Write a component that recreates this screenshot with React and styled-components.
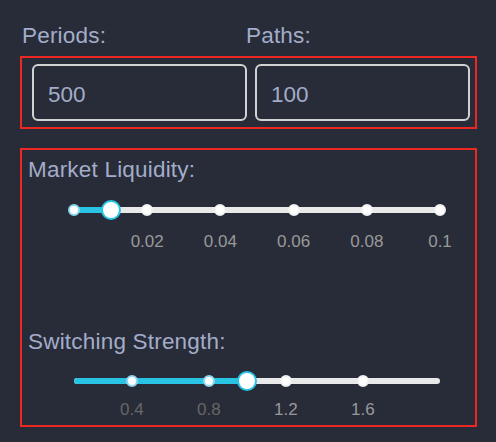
import React from "react"
import { styled, createGlobalStyle } from "styled-components"

const GlobalStyle = createGlobalStyle`
    body {
        margin: 0;
        background-color: #282c38;
        font-family: "Liberation Sans", Arial, sans-serif;
    }
`

const Page = styled.div`
    width: 496px;
    height: 442px;
    padding-left: 20px;
    box-sizing: border-box;
`

const LabelRow = styled.div`
    display: grid;
    grid-template-columns: 224px 1fr;
    height: 56px;
    padding: 25px 0 0 2px;
    box-sizing: border-box;
`

const Label = styled.div`
    color: #a3adc9;
    font-size: 22.5px;
    letter-spacing: 0.2px;
    line-height: 1;
`

const Box = styled.div`
    width: 457px;
    border: 2px solid #ec2822;
    box-sizing: border-box;
`

const InputBox = styled(Box)`
    display: flex;
    gap: 8px;
    height: 73px;
    padding: 6px 5px 6px 10px;
`

const Input = styled.input`
    flex: 1;
    min-width: 0;
    height: 57px;
    box-sizing: border-box;
    border: 2px solid #d2d2d2;
    border-radius: 6px;
    background: transparent;
    color: #a3adc9;
    font-family: inherit;
    font-size: 22.5px;
    padding: 4px 0 0 14px;
    outline: none;
`

const SliderBox = styled(Box)`
    display: flex;
    flex-direction: column;
    gap: 81px;
    margin-top: 19px;
    height: 279px;
    padding: 9px 0 0 6px;
`

const SliderGroup = styled.div`
    display: flex;
    flex-direction: column;
    align-items: flex-start;
`

const SliderWrap = styled.div`
    position: relative;
    margin: 18px 0 0 46px;
    width: 366px;
    height: 20px;
`

const Rail = styled.div`
    position: absolute;
    inset: 7px 0 auto 0;
    height: 6px;
    border-radius: 3px;
    background-color: #e9e9e9;
`

const Track = styled.div`
    position: absolute;
    left: 0;
    top: 7px;
    height: 6px;
    border-radius: 3px;
    background-color: #29c4e4;
`

const Dot = styled.span`
    position: absolute;
    top: 4px;
    width: 12px;
    height: 12px;
    margin-left: -6px;
    box-sizing: border-box;
    border-radius: 50%;
    background-color: #fff;
    border: 2px solid ${(p) => (p.$active ? "#8ed6f2" : "#f2f2f2")};
`

const Handle = styled.span`
    position: absolute;
    top: 0;
    width: 20px;
    height: 20px;
    margin-left: -10px;
    box-sizing: border-box;
    border-radius: 50%;
    background-color: #fff;
    border: 2px solid #29c4e4;
`

const Marks = styled.div`
    position: relative;
    margin: ${(p) => p.$gap}px 0 0 46px;
    width: 366px;
    height: 17px;
`

const MarkText = styled.span`
    position: absolute;
    top: 0;
    transform: translateX(-50%);
    font-size: 17px;
    line-height: 1;
    color: ${(p) => (p.$active ? "#666" : "#999")};
`

function Slider({ min, max, value, marks, dots, gap }) {
    const pct = (v) => ((v - min) / (max - min)) * 100 + "%"

    return (
        <>
            <SliderWrap>
                <Rail />
                <Track style={{ width: pct(value) }} />
                {
                    dots.map((d) => (
                        <Dot key={d} $active={d <= value} style={{ left: pct(d) }} />
                    ))
                }
                <Handle style={{ left: pct(value) }} />
            </SliderWrap>
            <Marks $gap={gap}>
                {
                    marks.map((m) => (
                        <MarkText key={m} $active={m <= value} style={{ left: pct(m) }}>{m}</MarkText>
                    ))
                }
            </Marks>
        </>
    )
}

function App() {
    return (
        <Page>
            <GlobalStyle />
            <LabelRow>
                <Label>Periods:</Label>
                <Label>Paths:</Label>
            </LabelRow>
            <InputBox>
                <Input defaultValue="500" />
                <Input defaultValue="100" />
            </InputBox>
            <SliderBox>
                <SliderGroup>
                    <Label>Market Liquidity:</Label>
                    <Slider
                        min={0}
                        max={0.1}
                        value={0.01}
                        dots={[0, 0.02, 0.04, 0.06, 0.08, 0.1]}
                        marks={[0.02, 0.04, 0.06, 0.08, 0.1]}
                        gap={13}
                    />
                </SliderGroup>
                <SliderGroup>
                    <Label>Switching Strength:</Label>
                    <Slider
                        min={0.1}
                        max={2}
                        value={1}
                        dots={[0.4, 0.8, 1.2, 1.6]}
                        marks={[0.4, 0.8, 1.2, 1.6]}
                        gap={10}
                    />
                </SliderGroup>
            </SliderBox>
        </Page>
    )
}

export default App
